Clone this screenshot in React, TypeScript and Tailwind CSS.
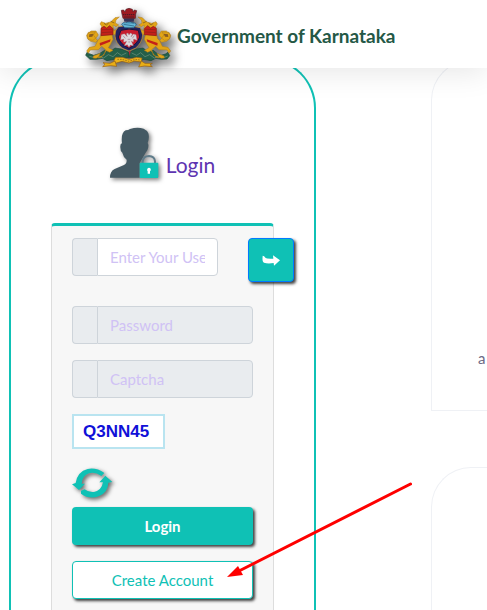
import type { ReactNode } from 'react'

function Lion() {
  return (
    <g>
      <path d="M88 160 L67 168 L66 174 L75 175 L99 165 L104 149 L92 139 L82 149 L58 150 L52 160 L47 153 L55 142 L72 139 L80 122 L67 105 L73 96 L52 97 L47 107 L52 119 L66 121 L76 113 L82 105 L75 93 L60 93 L48 104 L49 115 L59 124 L74 127 L86 116 L91 99 L92 79 L87 72 L91 65 L104 70 L119 66 L132 53 L145 51 L135 60 L133 69 L143 75 L135 80 L126 75 L128 92 L137 88 L143 94 L134 103 L123 105 L126 118 L119 132 L112 143 L126 151 L116 157 L106 152 L91 172 L81 174 Z" fill="#e2a516" stroke="#a8781f" strokeWidth="1.5" />
      <path d="M55 103 L68 101 L64 110 L54 111 Z" fill="#8b5c20" />
      <path d="M90 85 L99 79 L107 84 L116 77 L126 86 L126 104 L90 107 Z" fill="#c52019" stroke="#831a19" strokeWidth="2" />
      <path d="M93 89 L124 88 M92 98 L124 96" stroke="#8b2319" strokeWidth="2" />
      <path d="M86 129 L119 118 L117 125 L87 137 Z" fill="#c52019" />
      <path d="M99 70 L106 75 L113 69 M119 64 L130 69" fill="none" stroke="#71501d" strokeWidth="2" />
    </g>
  )
}

function Emblem() {
  return (
    <svg viewBox="42 24 252 180" className="h-[60px] w-[84px] shrink-0 overflow-visible drop-shadow-[4px_5px_5px_rgba(0,0,0,0.65)]" role="img" aria-label="State emblem">
      <g id="leaves" fill="#235f49" stroke="#174536" strokeWidth="2">
        <path d="M174 172 L155 174 L139 181 L129 178 L108 182 L94 175 L77 178 L57 178 L44 166 L48 157 L55 161 L68 166 L85 161 L101 151 L117 155 L132 144 L151 147 L174 157 Z" />
        <path d="M174 172 L193 174 L209 181 L219 178 L240 182 L254 175 L271 178 L288 177 L296 167 L291 157 L283 162 L270 166 L259 161 L247 151 L231 155 L216 144 L197 147 L174 157 Z" />
      </g>
      <path d="M55 169 L70 173 L84 168 L98 174 L112 164 L126 170 L139 158 L151 166 L166 159 M182 159 L197 166 L209 158 L222 170 L236 164 L250 174 L264 168 L278 173 L290 168" fill="none" stroke="#71957f" strokeWidth="2" />
      <Lion />
      <g transform="matrix(-1 0 0 1 346 0)">
        <Lion />
      </g>
      <path d="M142 80 Q131 91 132 108 Q134 130 155 145 L174 153 L194 144 Q213 129 215 105 L208 83 L191 80 L174 84 L158 78 Z" fill="#23225f" stroke="#d39f27" strokeWidth="2" />
      <path d="M150 91 L174 87 L202 91 L206 111 Q200 131 174 145 Q146 132 142 111 Z" fill="#c71d2d" stroke="#17173f" strokeWidth="3" />
      <path d="M169 110 L166 101 L171 99 L174 105 L178 99 L184 102 L180 111 L187 102 L195 104 L198 121 L188 117 L187 127 L181 123 L187 137 L178 135 L174 142 L169 134 L160 137 L167 124 L158 127 L158 117 L149 120 L151 104 L160 101 Z" fill="#ddd9dc" stroke="#8f7e8b" strokeWidth="1" />
      <path d="M156 107 L163 115 M190 107 L184 115 M170 118 L178 118 M172 126 L177 126" stroke="#9c7284" strokeWidth="2" />
      <path d="M152 73 Q154 66 164 68 L174 62 L184 68 Q196 67 196 75 L188 83 L161 83 Z" fill="#65b7d7" stroke="#164d78" strokeWidth="2" />
      <path d="M158 73 L189 78 M165 68 L189 69" stroke="#20577a" strokeWidth="2" />
      <path d="M158 55 L190 55 L188 65 L160 65 Z" fill="#343359" />
      <path d="M152 38 L151 31 L158 30 L162 36 L165 28 L174 25 L184 28 L187 36 L190 30 L197 32 L194 43 L193 55 L156 55 Z" fill="#9e1b22" stroke="#551c25" strokeWidth="2" />
      <path d="M156 44 L192 44 M160 51 L190 51" stroke="#421b26" strokeWidth="3" strokeDasharray="4 2" />
      <path d="M173 153 L179 153 L176 168 Z" fill="#b9273d" />
      <path d="M129 181 L134 172 L154 172 L174 178 L196 172 L213 174 L211 186 L191 183 L174 189 L153 184 L133 190 Z" fill="#edb318" stroke="#925d16" strokeWidth="2" />
      <path d="M139 178 L153 178 L174 184 L194 178 L207 180" fill="none" stroke="#84551c" strokeWidth="2" strokeDasharray="5 3" />
      <path d="M132 183 L117 190 L96 188 L102 193 L95 200 L119 197 L137 199 Z M211 183 L222 190 L244 190 L237 194 L244 200 L221 198 L203 201 Z" fill="#e9ae17" stroke="#925d16" strokeWidth="2" />
    </svg>
  )
}

function UserLockIcon() {
  return (
    <svg viewBox="45 36 150 156" className="h-[52px] w-[50px] overflow-visible drop-shadow-[2px_2px_2px_rgba(0,0,0,0.5)]" aria-hidden="true">
      <path d="M45 188 Q45 168 59 162 L87 150 Q96 146 95 134 Q85 127 82 113 Q75 108 76 93 Q76 86 81 85 Q77 53 92 46 Q100 46 105 42 Q127 35 146 41 Q157 46 160 55 Q164 68 158 84 Q163 91 157 106 L151 115 L134 144 L134 188 Z" fill="#455a64" />
      <path d="M143 146 V139 Q145 123 162 123 Q179 124 180 139 V146" fill="none" stroke="#607d8b" strokeWidth="6" />
      <rect x="134" y="143" width="56" height="46" rx="3" fill="#0fc1b5" />
      <path d="M158 169 Q155 166 157 161 Q162 156 167 161 Q169 166 165 169 V176 H158 Z" fill="#fff" />
    </svg>
  )
}

function RefreshIcon() {
  return (
    <svg viewBox="66 200 123 96" className="h-8 w-[41px] overflow-visible drop-shadow-[2px_2px_2px_rgba(0,0,0,0.6)]" fill="#0fc1b5" aria-hidden="true">
      <path d="M66 252 L77 248 Q82 214 113 206 Q139 201 163 218 L154 227 Q136 214 117 219 Q97 226 95 250 L105 250 L87 269 Z" />
      <path d="M148 246 L166 226 L187 245 L175 247 Q174 277 146 288 Q118 298 93 280 L93 271 L104 267 Q116 277 132 275 Q155 270 159 246 Z" />
    </svg>
  )
}

function Field({ label, placeholder, type, disabled, className }: {
  label: string
  placeholder: string
  type: string
  disabled?: boolean
  className?: string
}) {
  return (
    <div className={`flex h-[38px] min-w-0 ${className ?? ''}`}>
      <span className="w-[25px] shrink-0 rounded-l border border-r-0 border-[#ced4da] bg-[#e9ecef]" />
      <input
        type={type}
        aria-label={label}
        placeholder={placeholder}
        disabled={disabled}
        className="w-full min-w-0 rounded-r border border-[#ced4da] bg-white px-3 text-[15px] placeholder:text-[#d0c2f5] disabled:bg-[#e9ecef]"
      />
    </div>
  )
}

function Panel({ children, className }: { children?: ReactNode; className: string }) {
  return (
    <section className={`overflow-hidden rounded-tl-[40px] border-t border-l border-[#eff1f5] ${className}`}>
      {children}
    </section>
  )
}

export default function App() {
  return (
    <div className="relative flex h-screen flex-col overflow-hidden bg-white font-['Lato','Liberation_Sans',sans-serif]">
      <header className="relative z-10 flex h-[68px] shrink-0 items-start bg-white pt-2 pl-[85px] shadow-[0_4px_30px_rgba(0,0,0,0.1)]">
        <Emblem />
        <h1 className="mt-3 ml-2 text-[19px] leading-8 font-bold whitespace-nowrap text-[#245846]">Government of Karnataka</h1>
      </header>

      <main className="-mt-[10px] grid min-h-0 flex-1 grid-cols-[307fr_56fr] gap-[115px] pl-[9px]">
        {/* Login card */}
        <section className="min-w-0 rounded-t-[50px] border-2 border-b-0 border-[#0fc1b5] px-10 pt-[67px]">
          <div className="mb-11 flex h-[52px] items-end justify-center gap-[6px]">
            <UserLockIcon />
            <h2 className="text-[21px] leading-7 text-[#5e35b1]">Login</h2>
          </div>

          <form className="h-full rounded-t border border-t-3 border-[#ddd] border-t-[#0fc1b5] bg-[#f7f7f7] px-5 pt-3" onSubmit={(e) => e.preventDefault()}>
            <div className="-mr-[41px] mb-6 flex gap-[30px]">
              <Field label="User name" placeholder="Enter Your User Name" type="text" className="flex-1" />
              <button type="button" aria-label="Continue" className="flex h-11 w-[46px] shrink-0 items-center justify-center rounded border border-[#007bff] bg-[#0fc1b5] shadow-[2px_2px_3px_rgba(0,0,0,0.75)]">
                <svg viewBox="666 118 54 33" className="h-[11px] w-[18px]" fill="#fff" aria-hidden="true">
                  <path d="M668 120 Q672 120 677 127 Q680 130 700 129 L699 119 L720 134 L702 150 L701 142 Q683 145 672 141 Q666 139 668 120 Z" />
                </svg>
              </button>
            </div>
            <Field label="Password" placeholder="Password" type="password" disabled className="mb-4" />
            <Field label="Captcha" placeholder="Captcha" type="text" disabled className="mb-4" />

            <div className="flex h-[35px] w-[93px] items-center border-2 border-[#b9e4f0] bg-white pl-[9px] font-['Liberation_Sans',sans-serif] text-[17px] font-bold text-[#1010d8]">
              Q3NN45
            </div>
            <button type="button" aria-label="Refresh captcha" className="mt-[18px] mb-2 block">
              <RefreshIcon />
            </button>

            <button type="submit" className="mb-4 block h-[38px] w-full rounded bg-[#0fc1b5] text-[15px] font-bold text-white shadow-[2px_2px_3px_rgba(0,0,0,0.75)]">
              Login
            </button>
            <button type="button" className="block h-[38px] w-full rounded border border-[#0fc1b5] bg-white text-[15px] text-[#0fc1b5] shadow-[2px_2px_3px_rgba(0,0,0,0.75)]">
              Create Account
            </button>
          </form>
        </section>

        {/* Side panels */}
        <div className="flex min-w-0 flex-col gap-14 pt-[2px]">
          <Panel className="h-[351px] shrink-0 border-b pt-[285px] pl-[46px]">
            <p className="text-[15px] leading-6 text-[#6e6a85]">a</p>
          </Panel>
          <Panel className="flex-1" />
        </div>
      </main>

      {/* Pointer towards the account button */}
      <svg className="pointer-events-none absolute top-[482px] left-[226px] z-20 h-[97px] w-[187px]" viewBox="226 482 187 97" aria-hidden="true">
        <path d="M238 571.5 L410.5 484" stroke="#fe0000" strokeWidth="3" strokeLinecap="round" />
        <path d="M227 577 L238 566 L243 575 Z" fill="#fe0000" />
      </svg>
    </div>
  )
}
